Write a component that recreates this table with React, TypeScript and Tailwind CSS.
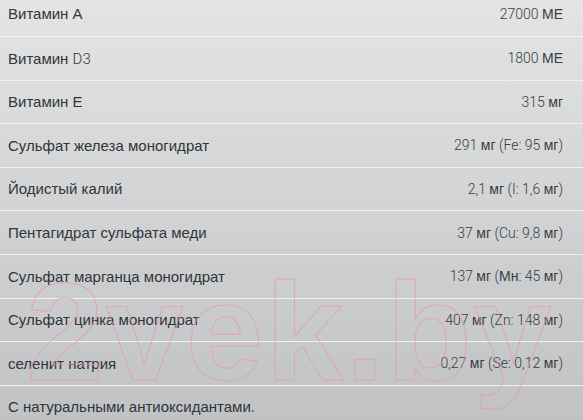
import React from "react";

type Part = { t: string; cy?: boolean };
type Row = { name: Part[]; value: Part[] };

const c = (t: string): Part => ({ t, cy: true });
const l = (t: string): Part => ({ t });

const rows: Row[] = [
  { name: [c("Витамин А")], value: [l("27000 "), c("МЕ")] },
  { name: [c("Витамин "), l("D3")], value: [l("1800 "), c("МЕ")] },
  { name: [c("Витамин Е")], value: [l("315 "), c("мг")] },
  { name: [c("Сульфат железа моногидрат")], value: [l("291 "), c("мг"), l(" (Fe: 95 "), c("мг"), l(")")] },
  { name: [c("Йодистый калий")], value: [l("2,1 "), c("мг"), l(" (I: 1,6 "), c("мг"), l(")")] },
  { name: [c("Пентагидрат сульфата меди")], value: [l("37 "), c("мг"), l(" (Cu: 9,8 "), c("мг"), l(")")] },
  { name: [c("Сульфат марганца моногидрат")], value: [l("137 "), c("мг"), l(" ("), c("Мн"), l(": 45 "), c("мг"), l(")")] },
  { name: [c("Сульфат цинка моногидрат")], value: [l("407 "), c("мг"), l(" (Zn: 148 "), c("мг"), l(")")] },
  { name: [c("селенит натрия")], value: [l("0,27 "), c("мг"), l(" (Se: 0,12 "), c("мг"), l(")")] },
  { name: [c("С натуральными антиоксидантами.")], value: [] },
];

function Text({ parts }: { parts: Part[] }) {
  return (
    <>
      {parts.map((p, i) =>
        p.cy ? (
          <span key={i} className="font-['Liberation_Sans',Arial,sans-serif] font-normal">
            {p.t}
          </span>
        ) : (
          <span key={i} className="font-['Roboto',sans-serif] font-light">
            {p.t}
          </span>
        )
      )}
    </>
  );
}

export default function App() {
  return (
    <div className="relative w-[583px] h-[420px] overflow-hidden bg-gradient-to-b from-[#e4e4e4] to-[#c0c2c4] text-[#30353a] font-['Liberation_Sans',Arial,sans-serif]">
      <div className="-mt-[7.6px] flex flex-col">
        {rows.map((r, i) => (
          <div
            key={i}
            className={
              "h-[43.6px] flex items-center justify-between pl-2 pr-5 pt-[1px] " +
              (i > 0 ? "border-t border-[#f1f1f1]" : "")
            }
          >
            <div className="text-[15px] whitespace-nowrap">
              <Text parts={r.name} />
            </div>
            <div className="text-[14px] whitespace-nowrap text-[#373c41]">
              <Text parts={r.value} />
            </div>
          </div>
        ))}
      </div>
      <div
        aria-hidden
        className="pointer-events-none absolute left-[26px] top-[262px] text-[140px] leading-none font-bold font-['Liberation_Sans',Arial,sans-serif] text-transparent [-webkit-text-stroke:1px_rgba(236,150,175,0.7)] tracking-[2px]"
      >
        2vek.by
      </div>
    </div>
  );
}
